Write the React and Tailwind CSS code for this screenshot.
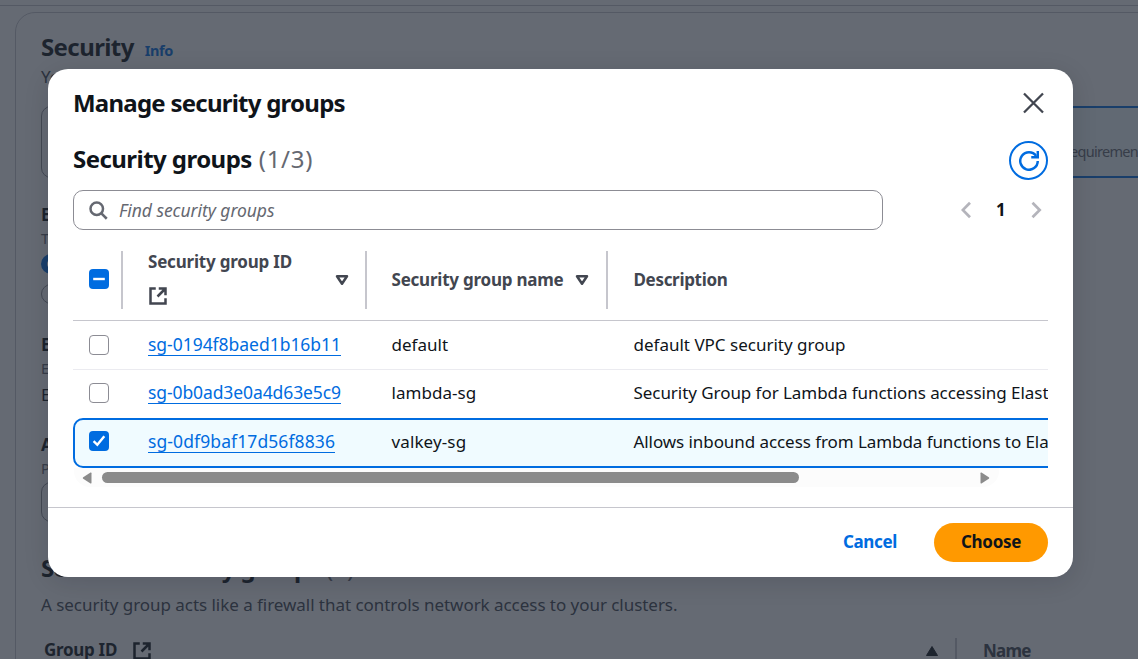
import React from 'react';

function ExternalIcon({ className }) {
  return (
    <svg viewBox="0 0 16 16" className={className} fill="none" stroke="currentColor" strokeWidth="2">
      <path d="M6.2 2H2v12h12V9.8" />
      <path d="M8.6 2H14v5.4M13.8 2.2 7.6 8.4" />
    </svg>
  );
}

function SortIcon() {
  return (
    <svg viewBox="0 0 16 16" className="size-5 shrink-0 text-[#424650]" fill="none" stroke="currentColor" strokeWidth="2" strokeLinejoin="round">
      <path d="M4 5h8l-4 6z" />
    </svg>
  );
}

function Checkbox({ state }) {
  if (state === 'off') {
    return <span className="block size-5 rounded-[4px] border-[1.5px] border-[#8c8c94] bg-white" />;
  }
  return (
    <span className="block size-5 rounded-[4px] bg-[#006ce0]">
      <svg viewBox="0 0 20 20" className="size-5" fill="none" stroke="white" strokeWidth="2.4">
        <path d={state === 'mixed' ? 'M4.2 10h11.6' : 'm4.6 10.2 3.7 3.6 7-8.6'} />
      </svg>
    </span>
  );
}

const rows = [
  {
    id: 'sg-0194f8baed1b16b11',
    name: 'default',
    text: 'default VPC security group',
    idClass: 'tracking-[-0.03px]',
    nameClass: 'tracking-[0.02px]',
    textClass: 'tracking-[0px]',
    rowClass: 'h-[49px] border-b border-[#ebebf0]',
  },
  {
    id: 'sg-0b0ad3e0a4d63e5c9',
    name: 'lambda-sg',
    text: 'Security Group for Lambda functions accessing ElastiCache',
    idClass: 'tracking-[-0.1px]',
    nameClass: 'tracking-[0.05px]',
    textClass: 'tracking-[-0.055px]',
    rowClass: 'h-12 pb-0.5',
  },
  {
    id: 'sg-0df9baf17d56f8836',
    name: 'valkey-sg',
    text: 'Allows inbound access from Lambda functions to ElastiCache',
    idClass: 'tracking-[0.1px]',
    nameClass: 'tracking-[0.12px]',
    textClass: 'tracking-[-0.07px]',
    rowClass: 'pb-0.5',
    selected: true,
  },
];

function Row({ row }) {
  const grid = row.selected
    ? 'h-[50px] w-[1200px] rounded-[10px] border-2 border-[#006ce0] bg-[#f0fbff] grid-cols-[48px_244px_241px_1fr]'
    : 'w-[1200px] grid-cols-[50px_244px_241px_1fr]';
  return (
    <div className={`grid items-center whitespace-nowrap text-[17px] leading-6 text-[#0f141a] ${grid} ${row.rowClass}`}>
      <div className={row.selected ? 'pl-3.5 pb-0.5' : 'pl-4'}>
        <Checkbox state={row.selected ? 'on' : 'off'} />
      </div>
      <div className="pl-[25px]">
        <span className={`inline-block border-b border-[#006ce0] text-[17.5px] leading-[22px] text-[#006ce0] ${row.idClass}`}>{row.id}</span>
      </div>
      <div className={`pl-[24.5px] ${row.nameClass}`}>{row.name}</div>
      <div className={`pl-[25.5px] ${row.textClass}`}>{row.text}</div>
    </div>
  );
}

function Page() {
  return (
    <div className="h-full overflow-hidden bg-white pt-[5px] text-[17px] text-[#424650]">
      <div className="h-px bg-[#c6c6cd]" />
      <div className="mt-1.5 ml-[15px] h-[760px] w-[1400px] rounded-[20px] border border-[#c6c6cd] pl-[25px]">
        <div className="flex h-[52px] items-end gap-[11px] leading-[30px]">
          <h1 className="pb-[3px] text-[24px] font-bold tracking-[-0.6px] text-[#0f141a]">Security</h1>
          <span className="text-[14.5px] font-bold tracking-[-0.4px] text-[#006ce0]">Info</span>
        </div>
        <p className="h-[41px] leading-6">You</p>
        <div className="flex h-[72px] w-[1300px] justify-between">
          <div className="w-[600px] rounded-[10px] border border-[#8c8c94]" />
          <div className="w-[640px] rounded-[10px] border-2 border-[#006ce0] bg-[#f0fbff] pt-[31px] pl-[362px]">
            <p className="text-[14.5px] leading-6 tracking-[-0.7px] text-[#656871]">requirements</p>
          </div>
        </div>
        <div className="flex h-[130px] flex-col pt-[25px]">
          <b className="leading-6 text-[#0f141a]">E</b>
          <span className="text-[14.5px] leading-[22px] text-[#656871]">T</span>
          <span className="mt-[5px] size-5 rounded-full border-[6px] border-[#006ce0]" />
          <span className="mt-2.5 size-5 rounded-full border border-[#8c8c94]" />
        </div>
        <div className="flex h-[100px] flex-col pt-[25px] text-[#0f141a]">
          <b className="leading-6">E</b>
          <span className="text-[14.5px] leading-[22px] text-[#656871]">E</span>
          <span className="mt-1 leading-6">E</span>
        </div>
        <div className="flex h-[145px] flex-col pt-[25px]">
          <b className="leading-6 text-[#0f141a]">A</b>
          <span className="text-[14.5px] leading-[22px] text-[#656871]">P</span>
          <span className="mt-[3px] h-10 w-[480px] rounded-[10px] border border-[#8c8c94]" />
        </div>
        <h2 className="flex h-10 gap-1.5 text-[24px] leading-[29px] text-[#656871]">
          <b className="tracking-[-0.6px] text-[#0f141a]">Selected security groups</b>(1)
        </h2>
        <p className="leading-6 tracking-[-0.045px]">A security group acts like a firewall that controls network access to your clusters.</p>
        <div className="flex h-[60px] items-start pt-[21px] pl-[3px] leading-6 font-bold text-[#0f141a]">
          <span className="w-[88px] tracking-[-0.3px]">Group ID</span>
          <ExternalIcon className="mt-[3px] size-5" />
          <svg viewBox="0 0 14 12" className="mt-[7px] ml-[773px] h-3 w-3.5" fill="currentColor" stroke="currentColor" strokeLinejoin="round">
            <path d="M7 1.5 12.5 10.5h-11z" />
          </svg>
          <span className="ml-4 h-10 w-0.5 bg-[#c6c6cd]" />
          <span className="ml-[26px] pt-px tracking-[-0.8px] text-[#424650]">Name</span>
        </div>
      </div>
    </div>
  );
}

function Modal() {
  return (
    <section className="flex h-[508px] w-[1025px] flex-col rounded-[20px] bg-white shadow-[0_5px_25px_1px_rgba(0,7,22,0.12)]">
      <header className="flex h-[72px] items-start justify-between pt-[19px] pr-[25px] pl-[25px]">
        <h2 className="text-[24px] leading-[30px] font-bold tracking-[-0.76px] text-[#0f141a]">Manage security groups</h2>
        <svg viewBox="0 0 30 30" className="size-[30px] text-[#424650]" fill="none" stroke="currentColor" strokeWidth="2.3">
          <path d="m6 5.500 19 19M25 5.500 6 24.500" />
        </svg>
      </header>
      <div className="flex h-[49px] items-start justify-between px-[25px]">
        <h3 className="flex gap-[7px] pt-[3px] text-[24px] leading-[30px] text-[#656871]">
          <b className="tracking-[-0.55px] text-[#0f141a]">Security groups</b>
          <span className="tracking-[0.7px]">(1/3)</span>
        </h3>
        <button className="flex size-[39px] items-center justify-center rounded-full border-2 border-[#006ce0] text-[#006ce0]">
          <svg viewBox="0 0 16 16" className="size-5 shrink-0" fill="none" stroke="currentColor" strokeWidth="2">
            <path d="M15 8a7 7 0 1 1-1.300-4.050" />
            <path d="M15.050 0v5H9.800" />
          </svg>
        </button>
      </div>
      <div className="flex h-10 items-center justify-between pr-[31px] pl-[25px]">
        <div className="flex h-10 w-[810px] items-center gap-[11px] rounded-[10px] border border-[#8c8c94] pl-3.5 text-[#656871]">
          <svg viewBox="0 0 16 16" className="size-5" fill="none" stroke="currentColor" strokeWidth="2">
            <circle cx="7" cy="7" r="5" />
            <path d="m15 15-4.500-4.500" />
          </svg>
          <span className="text-[17.5px] leading-6 tracking-[-0.05px] italic">Find security groups</span>
        </div>
        <div className="flex items-center text-[#b4b4bb]">
          <svg viewBox="0 0 11 18" className="h-[18px] w-[11px]" fill="none" stroke="currentColor" strokeWidth="2.700">
            <path d="M9 1.700 1.800 9l7.200 7.300" />
          </svg>
          <span className="mr-[26px] ml-6 w-[9px] text-center text-[17px] leading-6 font-bold text-[#0f141a]">1</span>
          <svg viewBox="0 0 11 18" className="h-[18px] w-[11px]" fill="none" stroke="currentColor" strokeWidth="2.700">
            <path d="M1.500 1.700 8.700 9l-7.200 7.300" />
          </svg>
        </div>
      </div>
      <div className="mx-[25px] mt-[11px] overflow-hidden">
        <div className="grid h-20 w-[1200px] grid-cols-[48px_244px_241px_1fr] border-b border-[#c6c6cd] pt-[10px] text-[17px] leading-6 font-bold text-[#424650]">
          <div className="pt-[18px] pl-4">
            <Checkbox state="mixed" />
          </div>
          <div className="flex h-[58px] items-center justify-between border-l-2 border-[#c6c6cd] pr-[13px] pl-[25px]">
            <div className="flex h-full flex-col">
              <span className="-mt-px tracking-[-0.2px]">Security group ID</span>
              <ExternalIcon className="mt-3 size-5" />
            </div>
            <SortIcon />
          </div>
          <div className="flex h-[58px] items-center gap-[9px] border-l-2 border-[#c6c6cd] pl-[24.5px]">
            <span className="tracking-[-0.23px]">Security group name</span>
            <SortIcon />
          </div>
          <div className="flex h-[58px] items-center border-l-2 border-[#c6c6cd] pl-[25.5px]">
            <span className="tracking-[-0.32px]">Description</span>
          </div>
        </div>
        {rows.map((row) => (
          <Row key={row.id} row={row} />
        ))}
      </div>
      <div className="ml-[26px] flex h-[19px] w-[925px] items-center rounded-b-[16px] bg-[#fcfcfc] pl-2">
        <svg viewBox="0 0 10 12" className="h-3 w-2.5" fill="#8b8b8b">
          <path d="M9.500 1.200v9.600q0 1-1 .6L1.200 6.800q-1-.8 0-1.600L8.500.6q1-.4 1 .6z" />
        </svg>
        <span className="ml-2.5 h-[11px] w-[697px] rounded-full bg-[#8b8b8b]" />
        <svg viewBox="0 0 10 12" className="ml-[181px] h-3 w-2.5" fill="#8b8b8b">
          <path d="M.5 1.200v9.600q0 1 1 .6l7.300-4.600q1-.8 0-1.600L1.500.6q-1-.4-1 .6z" />
        </svg>
      </div>
      <footer className="mt-auto flex h-[70px] items-center justify-end gap-[37px] border-t border-[#c6c6cd] pr-[25px] text-[17px] font-bold">
        <button className="pb-0.5 tracking-[-0.35px] text-[#006ce0]">Cancel</button>
        <button className="h-[39px] w-[114px] rounded-full bg-[#ff9900] pb-0.5 tracking-[-0.3px] text-[#0f141a]">Choose</button>
      </footer>
    </section>
  );
}

export default function App() {
  return (
    <main className="relative h-[659px] w-full overflow-hidden font-['Noto_Sans',sans-serif]">
      <Page />
      <div className="absolute inset-0 bg-[rgba(35,43,55,0.7)] pt-[69px] pl-12">
        <Modal />
      </div>
    </main>
  );
}
